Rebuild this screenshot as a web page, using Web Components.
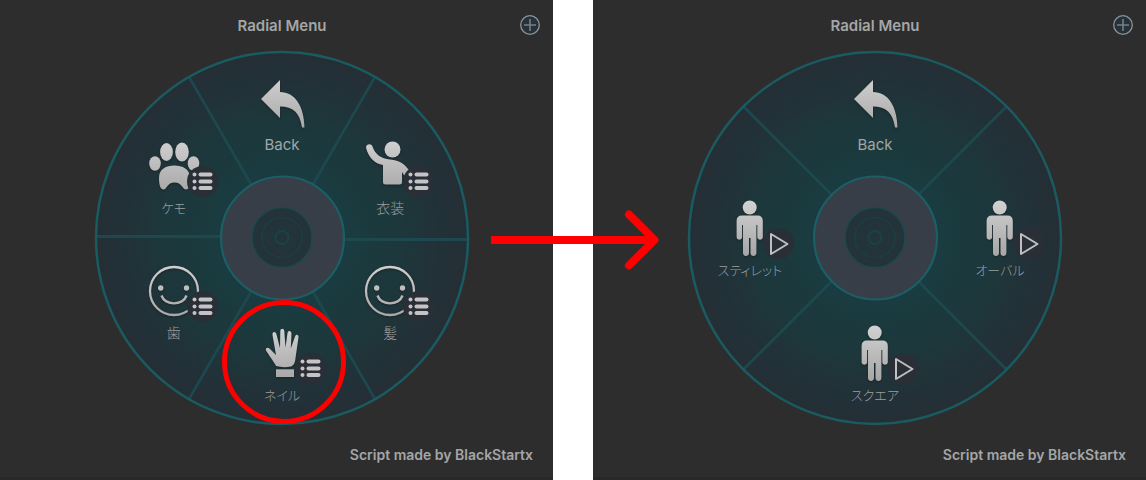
<!DOCTYPE html>
<html lang="ja">
<head>
<meta charset="utf-8">
<title>Radial Menu</title>
<style>
html, body { margin: 0; min-height: 100%; background: #fff; }
body { font-family: Inter, "Noto Sans CJK JP", sans-serif; }
</style>
</head>
<body>
<menu-steps>
  <radial-panel heading="Radial Menu" credit="Script made by BlackStartx">
    <radial-wheel sectors="6">
      <radial-item angle="0" icon="back">Back</radial-item>
      <radial-item angle="60" icon="wave" badge="list">衣装</radial-item>
      <radial-item angle="120" icon="smile" badge="list">髪</radial-item>
      <radial-item angle="180" icon="hand" badge="list" kana marked>ネイル</radial-item>
      <radial-item angle="240" icon="smile" badge="list">歯</radial-item>
      <radial-item angle="300" icon="paw" badge="list" kana>ケモ</radial-item>
    </radial-wheel>
  </radial-panel>
  <radial-panel heading="Radial Menu" credit="Script made by BlackStartx">
    <radial-wheel sectors="4">
      <radial-item angle="0" icon="back">Back</radial-item>
      <radial-item angle="90" icon="person" badge="play" kana>オーバル</radial-item>
      <radial-item angle="180" icon="person" badge="play" kana>スクエア</radial-item>
      <radial-item angle="270" icon="person" badge="play" kana>スティレット</radial-item>
    </radial-wheel>
  </radial-panel>
</menu-steps>
<script>
const ICONS = {
  back: '<path d="M7 24 26 5V17C41 17 50 31 50.500 52.500H48C46 38 39 31.500 26 31.500V43Z"/>',
  paw: '<ellipse cx="9" cy="25.500" rx="5.800" ry="7.300"/><ellipse cx="20.500" cy="14" rx="6.400" ry="9"/><ellipse cx="36" cy="14" rx="6.800" ry="9.500"/><ellipse cx="47.500" cy="25.500" rx="5.800" ry="7.300"/><path d="M13 40C13 31 20 27.500 28.300 27.500S44 31 44 40C44 44 44 51.500 40 51.500C36.500 51.500 36 44.500 28.500 44.500S21 51.500 17.500 51.500C13.500 51.500 13 44 13 40Z"/>',
  wave: '<circle cx="30.500" cy="11.500" r="8"/><path d="M4 9.500C4 5.500 9.500 5 10.500 8.500C13 16.500 19 20.500 28 21.500C38 22 43 27 47 32L42.500 38L40 34V44Q40 46.500 37.500 46.500H23.500Q21 46.500 21 44V27C13 26 6 19 4 9.500Z"/>',
  smile: '<circle cx="28" cy="28" r="24" fill="none" stroke="url(#g)" stroke-width="2.300"/><circle cx="14.700" cy="25" r="2.700"/><circle cx="40.500" cy="25" r="2.700"/><path d="M15.500 32.500C19 43 37 43 40.500 32.500" fill="none" stroke="url(#g)" stroke-width="2.400"/>',
  hand: '<path d="M22 41C20 37 14 29 12 25.500C11 22.500 14 22 16 24L22 30L18.500 10C18 6.500 21.500 6 22.500 9.500L26 23L26.300 6C26.500 3 30 3 30.300 6L31.500 22.500L33.500 8C34 5 37.500 5.500 37.500 8.500L36.800 23.500L41 11.500C42 8.500 45 9.500 44.500 12.500L41.500 33C41 38 40 40 37 41.500Q29 43 22 41Z"/><path d="M22 44.300H40V52H22Z"/>',
  person: '<circle cx="27.700" cy="7.500" r="7"/><path d="M20 15.500H35.500Q40.800 15.500 40.800 21V37C40.800 40.500 35.300 40.500 35.300 37V25H34.400V53C34.400 57 28.500 57 28.500 53V38H27V53C27 57 21 57 21 53V25H20.100V37C20.100 40.500 14.600 40.500 14.600 37V21Q14.600 15.500 20 15.500Z"/>'
};
const BADGES = {
  list: '<g fill="#c4c4c6"><circle cx="7.500" cy="8.500" r="2"/><circle cx="7.500" cy="15.500" r="2"/><circle cx="7.500" cy="22" r="2"/><rect x="11.500" y="6.500" width="14" height="4" rx="2"/><rect x="11.500" y="13.500" width="14" height="4" rx="2"/><rect x="11.500" y="20" width="14" height="4" rx="2"/></g>',
  play: '<path d="M8 6V26L24.500 16Z" fill="none" stroke="#c0c0c2" stroke-width="2" stroke-linejoin="round"/>'
};

customElements.define('menu-steps', class extends HTMLElement {
  constructor() {
    super();
    this.attachShadow({ mode: 'open' }).innerHTML = `
      <style>
        :host { display: block; position: relative; }
        main { display: flex; gap: 40px; min-height: 100vh; }
        ::slotted(*) { flex: 1; }
        svg { position: absolute; left: 50%; top: 50%; transform: translate(-50%, -50%); pointer-events: none; }
      </style>
      <main><slot></slot></main>
      <svg width="172" height="60" viewBox="0 0 172 60" fill="none" stroke="#f00" stroke-width="8" aria-hidden="true">
        <path d="M4 30H166"/><path d="M142 4.500 167.500 30 142 55.500" stroke-linecap="round" stroke-linejoin="round"/>
      </svg>`;
  }
});

customElements.define('radial-panel', class extends HTMLElement {
  connectedCallback() {
    this.attachShadow({ mode: 'open' }).innerHTML = `
      <style>
        :host { display: flex; flex-direction: column; box-sizing: border-box; min-width: 0; padding: 0 13px 0 24px; background: #2d2d2d; border-bottom: 3px solid #292728; color: #a4a6a7; }
        header { display: grid; grid-template-columns: 1fr auto 1fr; align-items: center; height: 50px; }
        h1 { grid-column: 2; margin: 0; padding-top: 2px; font-size: 15px; line-height: 20px; font-weight: 600; }
        button { justify-self: end; width: 20px; height: 20px; padding: 0; border: 0; background: none; }
        svg { display: block; }
        footer { padding: 19px 7px 0; text-align: right; font-size: 14px; line-height: 20px; font-weight: 600; }
      </style>
      <header>
        <h1></h1>
        <button type="button" aria-label="Add">
          <svg width="20" height="20" viewBox="0 0 20 20"><circle cx="10" cy="10" r="9.300" fill="#283038" stroke="#8b9599" stroke-width="1.300"/><path d="M10 4V16M4 10H16" stroke="#718087" stroke-width="1.600"/></svg>
        </button>
      </header>
      <slot></slot>
      <footer></footer>`;
    this.shadowRoot.querySelector('h1').textContent = this.getAttribute('heading');
    this.shadowRoot.querySelector('footer').textContent = this.getAttribute('credit');
  }
});

customElements.define('radial-wheel', class extends HTMLElement {
  connectedCallback() {
    const n = Number(this.getAttribute('sectors'));
    let spokes = '';
    for (let i = 0; i < n; i++) {
      const a = (i + 0.5) * 2 * Math.PI / n;
      // the two level spokes sit slightly above and below the axis
      const level = Math.abs(Math.cos(a)) < 0.01;
      const cy = level ? (Math.sin(a) > 0 ? 189.5 : 186.5) : 188;
      const at = r => (188 + r * Math.sin(a)).toFixed(1) + ' ' + (cy - r * Math.cos(a)).toFixed(1);
      spokes += `M${at(62)}L${at(186)}`;
    }
    this.attachShadow({ mode: 'open' }).innerHTML = `
      <style>
        :host { display: block; position: relative; align-self: center; width: 376px; height: 376px; }
        svg { display: block; width: 100%; height: 100%; }
      </style>
      <svg viewBox="0 0 376 376" aria-hidden="true">
        <defs>
          <radialGradient id="disc"><stop offset="0.400" stop-color="#1a3b3f"/><stop offset="0.650" stop-color="#1d373b"/><stop offset="0.850" stop-color="#223138"/><stop offset="1" stop-color="#252e35"/></radialGradient>
        </defs>
        <circle cx="188" cy="188" r="186" fill="url(#disc)"/>
        <path d="${spokes}" stroke="#1c484e" stroke-width="2.800"/>
        <circle cx="188" cy="188" r="186" fill="none" stroke="#1a5b62" stroke-width="2.500"/>
        <circle cx="188" cy="188" r="66" fill="none" stroke="#1b5056" stroke-width="1" stroke-dasharray="1 3" opacity="0.500"/>
        <circle cx="188.500" cy="188" r="61.500" fill="#383e47" stroke="#1b5f66" stroke-width="2.200"/>
        <circle cx="188" cy="187.500" r="30" fill="#243239" stroke="#1c484e" stroke-width="1.600"/>
        <g fill="none" stroke="#1b4145">
          <circle cx="188" cy="187.500" r="25" stroke-dasharray="1 2"/>
          <circle cx="188" cy="187.500" r="20" stroke-width="1.800" stroke-dasharray="2 1"/>
          <circle cx="188" cy="187.500" r="14" stroke-dasharray="1 1"/>
          <circle cx="188" cy="187.500" r="10" stroke-dasharray="1 1"/>
          <circle cx="188" cy="187.500" r="6.500" stroke-width="2.400"/>
          <circle cx="188" cy="187.500" r="2" stroke-dasharray="1 1"/>
        </g>
      </svg>
      <slot></slot>`;
  }
});

customElements.define('radial-item', class extends HTMLElement {
  connectedCallback() {
    const badge = BADGES[this.getAttribute('badge')];
    this.style.setProperty('--angle', this.getAttribute('angle') + 'deg');
    this.attachShadow({ mode: 'open' }).innerHTML = `
      <style>
        :host { position: absolute; width: 100px; height: 76px; transform: translate(-50%, -50%);
          left: calc(50% + sin(var(--angle)) * 125px); top: calc(50% - cos(var(--angle)) * 125px); }
        button { display: flex; flex-direction: column; align-items: center; width: 100%; padding: 0; border: 0; background: none;
          color: #9a9e9f; font: 400 14px/28px Inter, "Noto Sans CJK JP", sans-serif; font-feature-settings: "palt"; white-space: nowrap; }
        :host([icon="back"]) button { font-size: 15px; color: #a2a6a6; }
        :host(:not([icon="back"])) button { font-weight: 300; }
        :host([kana]) button { font-size: 13px; }
        .icon { position: relative; width: 56px; height: 56px; }
        svg { display: block; overflow: visible; }
        .picture { filter: drop-shadow(0 1px 1px #1c2428); }
        .badge { position: absolute; left: 41px; top: 28px; }
        :host([marked])::after { content: ""; position: absolute; box-sizing: border-box; left: -10px; top: -25px; width: 124px; height: 124px; border: 5px solid #f00; border-radius: 50%; pointer-events: none; }
      </style>
      <button type="button">
        <span class="icon">
          <svg class="picture" width="56" height="56" viewBox="0 0 56 56" fill="url(#g)" aria-hidden="true">
            <defs><linearGradient id="g" gradientUnits="userSpaceOnUse" x1="0" y1="0" x2="0" y2="56"><stop stop-color="#d2d2d2"/><stop offset="1" stop-color="#a6a6a6"/></linearGradient></defs>
            ${ICONS[this.getAttribute('icon')]}
          </svg>
          ${badge ? `<svg class="badge" width="31" height="31" viewBox="0 0 31 31" aria-hidden="true"><circle cx="15.500" cy="15.500" r="15.500" fill="#2a2e36"/>${badge}</svg>` : ''}
        </span>
        <slot></slot>
      </button>`;
  }
});
</script>
</body>
</html>
